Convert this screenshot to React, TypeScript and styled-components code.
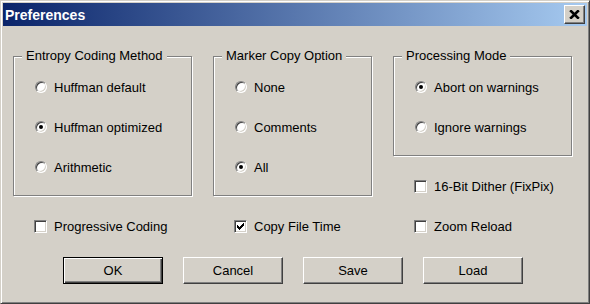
import React from "react";
import styled, { createGlobalStyle, css } from "styled-components";

const Global = createGlobalStyle`
  html, body { margin: 0; padding: 0; background: #d4d0c8; }
  body { font-family: "Liberation Sans", Arial, sans-serif; font-size: 13px; color: #000; }
  * { box-sizing: border-box; }
`;

const Window = styled.div`
  width: 590px;
  height: 304px;
  background: #d4d0c8;
  border: 1px solid;
  border-color: #d4d0c8 #404040 #404040 #d4d0c8;
  box-shadow: inset 1px 1px 0 #fff, inset -1px -1px 0 #808080;
  padding: 2px;
  display: flex;
  flex-direction: column;
`;

const TitleBar = styled.div`
  height: 23px;
  flex: none;
  display: flex;
  align-items: center;
  justify-content: space-between;
  padding: 0 2px 0 2px;
  background: linear-gradient(to right, #0a246a, #a6caf0);
`;

const Title = styled.span`
  color: #fff;
  font-weight: bold;
  font-size: 14px;
  line-height: 16px;
`;

const CloseButton = styled.button`
  width: 21px;
  height: 19px;
  padding: 0;
  margin: 0;
  background: #d4d0c8;
  border: 1px solid;
  border-color: #fff #404040 #404040 #fff;
  box-shadow: inset -1px -1px 0 #808080;
  display: flex;
  align-items: center;
  justify-content: center;
`;

const Body = styled.div`
  flex: 1;
  padding: 22px 0 0 10px;
  display: flex;
  flex-direction: column;
`;

const Grid = styled.div`
  display: grid;
  grid-template-columns: 179px 159px 179px;
  grid-template-rows: 148px 21px;
  column-gap: 21px;
  row-gap: 20px;
`;

const Column = styled.div`
  display: flex;
  flex-direction: column;
  gap: 20px;
`;

const Group = styled.fieldset<{ $h: number }>`
  margin: 0;
  padding: 13px 0 0 0;
  min-width: 0;
  height: ${(p) => p.$h}px;
  border: 1px solid #808080;
  box-shadow: inset 1px 1px 0 #fff, 1px 1px 0 #fff;
  display: flex;
  flex-direction: column;
  gap: 20px;
`;

const Legend = styled.legend`
  margin-left: 8px;
  padding: 0 4px;
  line-height: 16px;
  background: #d4d0c8;
`;

const Option = styled.label`
  display: flex;
  align-items: center;
  gap: 7px;
  height: 20px;
  padding-left: 21px;
  white-space: nowrap;
`;

const RadioCircle = styled.span<{ $checked?: boolean }>`
  position: relative;
  flex: none;
  width: 12px;
  height: 12px;
  border-radius: 50%;
  border: 1px solid;
  border-color: #808080 #fff #fff #808080;
  box-shadow: inset 1px 1px 0 #404040, inset -1px -1px 0 #d4d0c8;
  background: #fff;
  ${(p) =>
    p.$checked &&
    css`
      &::after {
        content: "";
        position: absolute;
        left: 3px;
        top: 3px;
        width: 4px;
        height: 4px;
        border-radius: 50%;
        background: #000;
      }
    `}
`;

const CheckBox = styled.span`
  flex: none;
  width: 13px;
  height: 13px;
  border: 1px solid;
  border-color: #808080 #fff #fff #808080;
  box-shadow: inset 1px 1px 0 #404040, inset -1px -1px 0 #d4d0c8;
  background: #fff;
  display: flex;
  align-items: center;
  justify-content: center;
`;

const ButtonRow = styled.div`
  display: flex;
  gap: 20px;
  margin: 20px 0 0 50px;
`;

const Button = styled.button<{ $default?: boolean }>`
  width: 100px;
  height: 27px;
  padding: 0;
  margin: 0;
  font: 13px "Liberation Sans", Arial, sans-serif;
  color: #000;
  background: #d4d0c8;
  ${(p) =>
    p.$default
      ? css`
          border: 1px solid #000;
          box-shadow: inset 1px 1px 0 #fff, inset -1px -1px 0 #404040,
            inset -2px -2px 0 #808080;
        `
      : css`
          border: 1px solid;
          border-color: #fff #404040 #404040 #fff;
          box-shadow: inset -1px -1px 0 #808080;
        `}
`;

const CheckMark = () => (
  <svg width="7" height="7" viewBox="0 0 7 7" shapeRendering="crispEdges">
    <g fill="#000">
      <rect x="6" y="0" width="1" height="1" />
      <rect x="5" y="1" width="2" height="1" />
      <rect x="0" y="2" width="1" height="1" />
      <rect x="4" y="2" width="3" height="1" />
      <rect x="0" y="3" width="2" height="1" />
      <rect x="3" y="3" width="3" height="1" />
      <rect x="0" y="4" width="5" height="1" />
      <rect x="1" y="5" width="3" height="1" />
      <rect x="2" y="6" width="1" height="1" />
    </g>
  </svg>
);

const CloseGlyph = () => (
  <svg width="11" height="9" viewBox="0 0 11 9">
    <path d="M1.2 0.3 L9.8 8.7 M9.8 0.3 L1.2 8.7" stroke="#000" strokeWidth="2.6" fill="none" />
  </svg>
);

const Radio = ({ label, checked }: { label: string; checked?: boolean }) => (
  <Option>
    <RadioCircle $checked={checked} />
    <span>{label}</span>
  </Option>
);

const Check = ({ label, checked }: { label: string; checked?: boolean }) => (
  <Option>
    <CheckBox>{checked && <CheckMark />}</CheckBox>
    <span>{label}</span>
  </Option>
);

export default function App() {
  return (
    <>
      <Global />
      <Window>
        <TitleBar>
          <Title>Preferences</Title>
          <CloseButton aria-label="Close">
            <CloseGlyph />
          </CloseButton>
        </TitleBar>
        <Body>
          <Grid>
            <Group $h={148}>
              <Legend>Entropy Coding Method</Legend>
              <Radio label="Huffman default" />
              <Radio label="Huffman optimized" checked />
              <Radio label="Arithmetic" />
            </Group>
            <Group $h={148}>
              <Legend>Marker Copy Option</Legend>
              <Radio label="None" />
              <Radio label="Comments" />
              <Radio label="All" checked />
            </Group>
            <Column>
              <Group $h={109}>
                <Legend>Processing Mode</Legend>
                <Radio label="Abort on warnings" checked />
                <Radio label="Ignore warnings" />
              </Group>
              <Check label="16-Bit Dither (FixPix)" />
            </Column>
            <Check label="Progressive Coding" />
            <Check label="Copy File Time" checked />
            <Check label="Zoom Reload" />
          </Grid>
          <ButtonRow>
            <Button $default>OK</Button>
            <Button>Cancel</Button>
            <Button>Save</Button>
            <Button>Load</Button>
          </ButtonRow>
        </Body>
      </Window>
    </>
  );
}
